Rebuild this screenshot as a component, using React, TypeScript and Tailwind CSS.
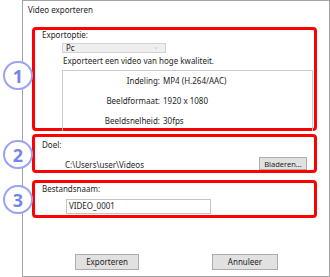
import { ChevronDown } from 'lucide-react'

interface StepProps {
  n: number
  className: string
}

const Step: React.FC<StepProps> = ({ n, className }) => (
  <div className={`absolute left-[3px] w-[30px] h-[29px] rounded-full border-2 border-[#9aa3f4] bg-white flex items-center justify-center text-[18px] font-bold leading-none text-[#7684ee] ${className}`}>
    {n}
  </div>
)

const InfoRow = ({ label, value }: { label: string; value: string }) => (
  <div className="h-[20px] flex items-center">
    <div className="w-[97px] text-right">{label}</div>
    <div className="ml-[3px]">{value}</div>
  </div>
)

export default function App() {
  return (
    <div className="relative w-[330px] h-[277px] bg-white font-['Noto_Sans',sans-serif] text-[8px] leading-[8px] text-[#1e1e1e] overflow-hidden">
      <div className="ml-[22px] w-[308px] h-[277px] border border-[#a3a3a3] bg-white flex flex-col">
        <div className="h-[26px] pl-[5px] pt-[5px]">Video exporteren</div>

        {/* exportoptie */}
        <div className="ml-[9px] w-[285px] h-[104px] border-[3px] border-[#ff0000] rounded-[4px] flex flex-col">
          <div className="ml-[7px] mt-px">Exportoptie:</div>
          <div className="ml-[27px] mt-[4px] w-[104px] h-[12px] border border-[#d2d2d2] bg-[#efefef] flex items-center justify-between pl-[3px] pr-[6px]">
            <span>Pc</span>
            <ChevronDown size={6} strokeWidth={1.3} className="text-[#8a8a8a]" />
          </div>
          <div className="ml-[28px] mt-[4px]">Exporteert een video van hoge kwaliteit.</div>
          <div className="ml-[27px] mr-px mt-[5px] flex-1 border border-b-0 border-[#cccccc] flex flex-col">
            <InfoRow label="Indeling:" value="MP4 (H.264/AAC)" />
            <InfoRow label="Beeldformaat:" value="1920 x 1080" />
            <InfoRow label="Beeldsnelheid:" value="30fps" />
          </div>
        </div>

        {/* doel */}
        <div className="ml-[9px] mt-[3px] w-[285px] h-[39px] border-[3px] border-[#ff0000] rounded-[4px] flex flex-col">
          <div className="ml-[7px] mt-[4px]">Doel:</div>
          <div className="flex items-end justify-between mt-auto pr-[7px]">
            <div className="ml-[30px] mb-[1px]">C:\Users\user\Videos</div>
            <button className="w-[48px] h-[13px] border border-[#adadad] bg-[#e1e1e1] flex items-center justify-center text-[7.5px]">Bladeren...</button>
          </div>
        </div>

        {/* bestandsnaam */}
        <div className="ml-[9px] mt-[7px] w-[285px] h-[38px] border-[3px] border-[#ff0000] rounded-[4px] flex flex-col">
          <div className="ml-[7px] mt-[2px]">Bestandsnaam:</div>
          <div className="ml-[31px] mt-[6px] w-[145px] h-[15px] border border-[#c4c4c4] pl-[2px] pt-[2px]">VIDEO_0001</div>
        </div>

        <div className="mt-[36px] flex">
          <button className="ml-[52px] w-[64px] h-[16px] border border-[#adadad] bg-[#e1e1e1] flex items-center justify-center">Exporteren</button>
          <button className="ml-[73px] w-[66px] h-[16px] border border-[#adadad] bg-[#e1e1e1] flex items-center justify-center">Annuleer</button>
        </div>
      </div>

      <Step n={1} className="top-[61px]" />
      <Step n={2} className="top-[140px]" />
      <Step n={3} className="top-[185px]" />
    </div>
  )
}
